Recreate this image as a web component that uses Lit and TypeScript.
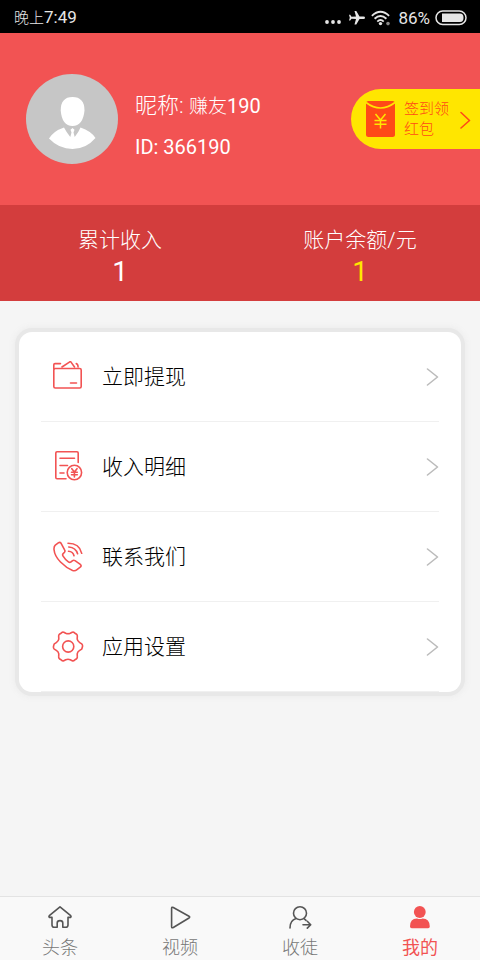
import { LitElement, html, css, svg } from "lit";
import { customElement, state } from "lit/decorators.js";
import { classMap } from "lit/directives/class-map.js";

const menu = [
  {
    label: "立即提现",
    icon: svg`
      <rect x="1.8" y="7.500" width="27.400" height="19.500" rx="1.500"/>
      <path d="M1.800 8V3.800q0-1.200 1.200-1.200H8.500M10 6L17.800 .8q.7-.4 1.200.3L22.500 6M24.300 2.600q1.600.3 1.800 3.400M18.500 22h6"/>`,
  },
  {
    label: "收入明细",
    icon: svg`
      <path d="M14 27.800H5q-1.200 0-1.200-1.200V2q0-1.200 1.200-1.200H25q1.200 0 1.200 1.200V11.500M8 7.300H22.500M8 14.500h7.500M8 22h4"/>
      <circle cx="22.400" cy="21.500" r="7.200"/>
      <path d="M19.800 17.700l2.600 3.300 2.600-3.300M22.400 21v5M19.500 21.300h5.800M19.500 23.700h5.800"/>`,
  },
  {
    label: "联系我们",
    icon: svg`
      <path d="M6.600 1.700L3.300 4.100Q1.800 5.500 2 8.500q.6 6.500 6.500 12.500T20.600 29.500q2.500.7 4.400-.8l3.500-2.800q1.300-1.300-.2-2.600l-5.300-3.700q-1.400-.9-2.700.2l-1.600 1.300q-1.100.7-2.300-.3-3.400-2.500-5.500-6-.7-1.200.3-2.200l1.300-1.300q.9-1.100.1-2.400L9.100 2.300q-1.100-1.400-2.500-.6z"/>
      <path d="M16.500 10.300q4.500.3 5.500 4.500M16.800 6q7 .6 8.800 6.700M16 2.300q11.500 0 13.700 10"/>`,
  },
  {
    label: "应用设置",
    icon: svg`
      <path d="M9 2.300q1-1.600 2.800-1l1.900 1q2.300 1 4.600 0l1.900-1q1.800-.6 2.800 1l1.600 1q.9 1 .7 2.300l-.1 2.600q.3 2 2.500 3.400l2 1.300q1.100 1 .8 2.600t-.8 2.600l-2 1.300q-2.200 1.400-2.500 3.400l.1 2.600q.2 1.300-.7 2.300l-1.600 1q-1 1.600-2.800 1l-1.900-1q-2.300-1-4.600 0l-1.900 1q-1.800.6-2.800-1l-1.600-1q-.9-1-.7-2.300l.1-2.600q-.3-2-2.500-3.400l-2-1.300q-1.100-1-.8-2.600t.8-2.600l2-1.300q2.200-1.400 2.500-3.400l-.1-2.600q-.2-1.300.7-2.300z"/>
      <circle cx="16.200" cy="15.500" r="5.600"/>`,
  },
];

const tabs = [
  {
    label: "头条",
    icon: svg`<path d="M12 1.800L1.300 10.700q-.8.900.2 1.700h2.500V20q0 2.300 2.300 2.300H9.200V18q0-2.400 2.800-2.400t2.800 2.400v4.300h2.900Q20 22.300 20 20V12.400h2.500q1-.8.2-1.700z"/>`,
  },
  {
    label: "视频",
    icon: svg`<path d="M3.600 3.500q0-1.900 1.700-1L21 11.200q1.400.9 0 1.800L5.300 22.500q-1.700.9-1.700-1z"/>`,
  },
  {
    label: "收徒",
    icon: svg`<circle cx="12" cy="8.200" r="6.500"/><path d="M2 23Q2 15.500 8 13.600M16 13.600l2 1.700M15 19.700h7.500M19.300 16.300l3.400 3.400-3.400 3.400"/>`,
  },
  {
    label: "我的",
    icon: svg`<g fill="currentColor" stroke="none"><circle cx="11.800" cy="7" r="5.900"/><path d="M2 21.500Q2 13.500 9 13.500q2.800 1 5.600 0 7 0 7.200 8 0 1.800-1.700 1.800H3.700Q2 23.300 2 21.500z"/></g>`,
  },
];

@customElement("app-root")
export class AppRoot extends LitElement {
  @state() active = 3;

  static styles = css`
    :host {
      display: flex;
      flex-direction: column;
      min-height: 100vh;
      background: #f5f5f5;
      color: #000;
      font-family: Roboto, "Noto Sans CJK SC", sans-serif;
      font-weight: 400;
    }
    * { box-sizing: border-box; }
    button {
      border: 0;
      margin: 0;
      padding: 0;
      background: none;
      font: inherit;
      color: inherit;
      cursor: pointer;
    }
    svg { display: block; flex: none; }
    .line {
      fill: none;
      stroke: currentColor;
      stroke-width: 1.6;
      stroke-linecap: round;
      stroke-linejoin: round;
    }
    .status {
      display: flex;
      align-items: center;
      justify-content: space-between;
      height: 33px;
      padding: 2px 13px 0 14px;
      background: #000;
      color: #e6e6e6;
      font-size: 17px;
      line-height: 20px;
    }
    .status .cjk { font-size: 15px; font-weight: 300; }
    .signals { display: flex; align-items: center; gap: 5px; }
    .profile {
      display: flex;
      align-items: center;
      height: 172px;
      padding-left: 26px;
      background: #f25353;
      color: #fff;
    }
    .who {
      flex: 1;
      margin-left: 17px;
      padding-top: 14px;
      font-size: 20px;
      line-height: 40px;
      white-space: nowrap;
    }
    .who p { margin: 0; }
    .who .key { font-size: 22px; font-weight: 300; }
    .who .cjk { font-size: 19px; font-weight: 300; }
    .badge {
      display: flex;
      align-items: center;
      height: 60px;
      padding: 0 9px 0 14px;
      border-radius: 30px 0 0 30px;
      background: #ffe600;
      color: #ff4a17;
      font-size: 15px;
      font-weight: 300;
      line-height: 20px;
      text-align: left;
    }
    .badge span { width: 48px; margin: 0 8px; }
    .stats {
      display: grid;
      grid-template-columns: 1fr 1fr;
      height: 96px;
      margin: 0;
      padding-top: 20px;
      background: #d33d3d;
      color: #fff;
      text-align: center;
    }
    .stats dt { font-size: 21px; font-weight: 300; line-height: 30px; }
    .stats dd { margin: 0; font-size: 28px; line-height: 34px; }
    .stats .gold { color: #ffe600; }
    .body { flex: 1; padding: 31px 19px; }
    .card {
      margin: 0;
      padding: 0 22px;
      list-style: none;
      border-radius: 13px;
      background: #fff;
      box-shadow: 0 0 0 4px #e8e8e8, 0 0 6px 5px #ececec;
    }
    .row {
      display: flex;
      align-items: center;
      width: 100%;
      height: 90px;
      padding: 0 0 0 11px;
      border-bottom: 1px solid #f0f0f0;
      text-align: left;
    }
    .row .icon { color: #f25353; }
    .row .label { flex: 1; margin-left: 18px; font-size: 21px; line-height: 30px; font-weight: 300; }
    .row .arrow { color: #bbb; }
    .tabs {
      display: grid;
      grid-template-columns: repeat(4, 1fr);
      height: 64px;
      border-top: 1px solid #e3e3e3;
      background: #f9f9f9;
    }
    .tab {
      display: flex;
      flex-direction: column;
      align-items: center;
      padding-top: 8px;
      color: #555;
      font-size: 18px;
      line-height: 24px;
      font-weight: 300;
    }
    .tab span { margin-top: 7px; color: #777; line-height: 24px; }
    .tab.active, .tab.active span { color: #f25353; }
    .tab.active span { font-weight: 400; }
  `;

  render() {
    return html`
      <div class="status">
        <div><span class="cjk">晚上</span>7:49</div>
        <div class="signals">
          <svg width="18" height="16" viewBox="0 0 18 16" fill="currentColor">
            <circle cx="2" cy="12" r="1.900"/><circle cx="8" cy="12" r="1.900"/><circle cx="14" cy="12" r="1.900"/>
          </svg>
          <svg width="18" height="16" viewBox="0 0 18 16" fill="currentColor">
            <path d="M17 7.700q0-1.200-1.500-1.200H11.500L8.300 1H6.500L8 6.500 3.500 6.700 2.200 4.800H1l.8 2.900L1 10.600h1.200L3.500 8.700 8 9 6.500 14.500h1.800L11.500 9h4q1.500 0 1.500-1.300z"/>
          </svg>
          <svg width="22" height="16" viewBox="0 0 22 16">
            <g fill="none" stroke="currentColor" stroke-width="1.900">
              <path d="M.9 5.900Q9.500-2.200 18.100 5.900M3.600 8.800Q9.500 3.200 15.400 8.800M6.300 11.600Q9.500 8.600 12.700 11.600"/>
            </g>
            <circle cx="9.500" cy="13.600" r="1.700" fill="currentColor"/>
            <circle cx="17" cy="13.600" r="1.800" fill="#888"/>
          </svg>
          <span>86%</span>
          <svg width="32" height="16" viewBox="0 0 32 16">
            <rect x="1" y="1" width="30" height="13.500" rx="6.700" fill="none" stroke="currentColor" stroke-width="1.500"/>
            <path d="M7 3.500H25q3.500 0 3.500 4.200T25 12H7z" fill="currentColor"/>
          </svg>
        </div>
      </div>

      <header class="profile">
        <svg width="92" height="90" viewBox="0 0 92 90" role="img" aria-label="头像">
          <ellipse cx="46" cy="45" rx="46" ry="45" fill="#c6c6c6"/>
          <path fill="#fff" d="M46.500 23q12 0 12 13.500Q57 52 46.500 52T34.700 36.500Q34.700 23 46.500 23zM38 53.500q2 4 6.300 9.500l1.200-4.500-1-2.700 2-1.800 2 1.800-1 2.700 1.200 4.500Q53 57.500 54.500 53.500 65 57 69.500 64 60 75 46.500 75T23 64.500Q27.500 57 38 53.500z"/>
        </svg>
        <div class="who">
          <p><span class="key">昵称: </span><span class="cjk">赚友</span>190</p>
          <p>ID: 366190</p>
        </div>
        <button class="badge">
          <svg width="31" height="38" viewBox="0 0 31 38">
            <rect x="1" y="1" width="29" height="36" rx="2.500" fill="currentColor"/>
            <path d="M1 2.500Q15.500 13.500 30 2.500" fill="none" stroke="#ffe600" stroke-width="1.600"/>
            <path d="M10.500 14l5 6 5-6M15.500 20V28.500M9.500 20.500h12M9.500 24.300h12" fill="none" stroke="#ffe600" stroke-width="1.500"/>
          </svg>
          <span>签到领<br>红包</span>
          <svg class="line" width="11" height="20" viewBox="0 0 11 20"><path d="M1 3.500L9.500 11.500 1 19"/></svg>
        </button>
      </header>

      <dl class="stats">
        <div><dt>累计收入</dt><dd>1</dd></div>
        <div><dt>账户余额/元</dt><dd class="gold">1</dd></div>
      </dl>

      <main class="body">
        <ul class="card">
          ${menu.map(
            (m) => html`<li>
              <button class="row">
                <svg class="icon line" width="32" height="32" viewBox="0 0 32 32">${m.icon}</svg>
                <span class="label">${m.label}</span>
                <svg class="arrow line" width="13" height="18" viewBox="0 0 13 18"><path d="M1.500 1L11.500 9 1.500 17"/></svg>
              </button>
            </li>`
          )}
        </ul>
      </main>

      <nav class="tabs">
        ${tabs.map(
          (t, i) => html`<button
            class=${classMap({ tab: true, active: i === this.active })}
            @click=${() => (this.active = i)}
          >
            <svg class="line" width="24" height="24" viewBox="0 0 24 24">${t.icon}</svg>
            <span>${t.label}</span>
          </button>`
        )}
      </nav>
    `;
  }
}
